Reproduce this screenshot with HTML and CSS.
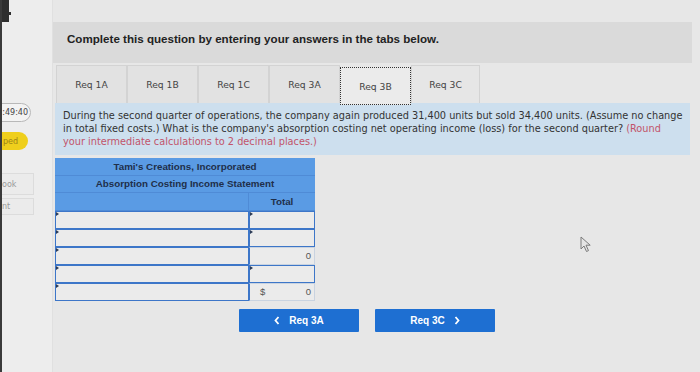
FILE: index.html
```html
<!DOCTYPE html>
<html lang="en">
<head>
    <meta charset="UTF-8">
    <meta name="viewport" content="width=device-width, initial-scale=1.0">
    <title>Req 3B</title>
    <link rel="stylesheet" href="styles.css">
</head>
<body>
    <div class="bezel-mark"></div>

    <div class="sidebar">
        <div class="timer">:49:40</div>
        <div class="skipped">ped</div>
        <div class="side-link ebook">ook</div>
        <div class="side-link print">nt</div>
    </div>

    <div class="main">
        <div class="instructions">Complete this question by entering your answers in the tabs below.</div>

        <div class="tabs">
            <div class="tab">Req 1A</div>
            <div class="tab">Req 1B</div>
            <div class="tab">Req 1C</div>
            <div class="tab">Req 3A</div>
            <div class="tab active">Req 3B</div>
            <div class="tab light">Req 3C</div>
        </div>

        <div class="question">
            During the second quarter of operations, the company again produced 31,400 units but sold 34,400 units. (Assume no change<br>
            in total fixed costs.) What is the company's absorption costing net operating income (loss) for the second quarter? <span class="hint">(Round<br>
            your intermediate calculations to 2 decimal places.)</span>
        </div>

        <div class="statement">
            <div class="st-head span">Tami's Creations, Incorporated</div>
            <div class="st-head span">Absorption Costing Income Statement</div>
            <div class="st-head blank"></div>
            <div class="st-head total">Total</div>

            <div class="cell input"></div>
            <div class="cell input"></div>

            <div class="cell input"></div>
            <div class="cell input"></div>

            <div class="cell input"></div>
            <div class="cell calc">0</div>

            <div class="cell input"></div>
            <div class="cell input"></div>

            <div class="cell input"></div>
            <div class="cell calc"><span class="dollar">$</span>0</div>
        </div>

        <div class="nav">
            <button class="nav-btn">
                <svg class="chev" width="6" height="9" viewBox="0 0 6 9"><polyline points="4.5,1 1.5,4.5 4.5,8" fill="none" stroke="#fff" stroke-width="1.8"/></svg>
                Req 3A
            </button>
            <button class="nav-btn">
                Req 3C
                <svg class="chev" width="6" height="9" viewBox="0 0 6 9"><polyline points="1.5,1 4.5,4.5 1.5,8" fill="none" stroke="#fff" stroke-width="1.8"/></svg>
            </button>
        </div>
    </div>

    <svg class="cursor" width="12" height="17" viewBox="0 0 12 17">
        <path d="M1 1 L1 13 L4 10 L6.5 15.5 L8.5 14.6 L6 9.2 L10.2 9.2 Z" fill="#e4e4e4" stroke="#7a7a7a" stroke-width="1" stroke-linejoin="round"/>
    </svg>
</body>
</html>
```

FILE: styles.css
```css
body {
    margin: 0;
    padding: 0;
    width: 700px;
    height: 372px;
    overflow: hidden;
    display: flex;
    background: #e7e7e7;
    font-family: 'DejaVu Sans', sans-serif;
    color: #333;
    border-left: 2px solid #3a3a3a;
    box-sizing: border-box;
    position: relative;
}
.bezel-mark {
    position: absolute;
    left: 0;
    top: 0;
    width: 7px;
    height: 22px;
    background: #2e2e2e;
}
.bezel-mark::after {
    content: '';
    position: absolute;
    left: 0;
    top: 12px;
    width: 9px;
    height: 3px;
    background: #2e2e2e;
}
.sidebar {
    width: 51px;
    flex-shrink: 0;
    background: #ededed;
    border-right: 1px solid #e0e0e0;
    padding-top: 103px;
    box-sizing: border-box;
    overflow: hidden;
    font-size: 8px;
}
.timer {
    margin-left: -10px;
    width: 39px;
    height: 19px;
    border: 1px solid #b8b8b8;
    border-radius: 10px;
    box-sizing: border-box;
    display: flex;
    align-items: center;
    justify-content: flex-end;
    padding-right: 2px;
    color: #444;
    background: #f3f3f3;
}
.skipped {
    margin-top: 10px;
    margin-left: -12px;
    width: 38px;
    height: 18px;
    border-radius: 9px;
    background: #efcf1c;
    color: #9c8418;
    display: flex;
    align-items: center;
    padding-left: 13px;
    box-sizing: border-box;
}
.side-link {
    margin-left: -4px;
    width: 36px;
    border: 1px solid #dcdcdc;
    background: #ebebeb;
    box-sizing: border-box;
    color: #9a9a9a;
    display: flex;
    align-items: center;
    padding-left: 3px;
}
.ebook {
    margin-top: 23px;
    height: 22px;
}
.print {
    margin-top: 3px;
    height: 17px;
}
.main {
    flex: 1;
    padding-top: 22px;
}
.instructions {
    width: 639px;
    height: 41px;
    background: #dadada;
    box-sizing: border-box;
    padding: 10px 0 0 14px;
    font-family: 'Liberation Sans', Arial, sans-serif;
    font-weight: bold;
    font-size: 11.6px;
    color: #222;
}
.tabs {
    display: flex;
    margin-top: 2px;
    margin-left: 3px;
    height: 38px;
}
.tab {
    width: 71px;
    height: 38px;
    box-sizing: border-box;
    background: #e2e2e2;
    border: 1px solid #d3d3d3;
    border-bottom: none;
    display: flex;
    align-items: center;
    justify-content: center;
    font-size: 9.2px;
    color: #444;
}
.tab.active {
    background: #ebebeb;
    border: 1px dotted #333;
    margin-top: 2px;
    position: relative;
    z-index: 1;
}
.tab.light {
    background: #e6e6e6;
    width: 69px;
}
.question {
    margin-left: 2px;
    width: 635px;
    height: 52px;
    background: #cddfee;
    box-sizing: border-box;
    padding: 6px 0 0 8px;
    font-size: 9.75px;
    line-height: 13.2px;
    color: #333;
    white-space: nowrap;
}
.hint {
    color: #c2546a;
}
.statement {
    margin-top: 3px;
    margin-left: 2px;
    width: 260px;
    display: grid;
    grid-template-columns: 194px 66px;
    font-family: 'Liberation Sans', Arial, sans-serif;
}
.st-head {
    background: #5a9be4;
    color: #1f2f4a;
    font-weight: bold;
    font-size: 9.8px;
    height: 17.5px;
    display: flex;
    align-items: center;
    justify-content: center;
    border-bottom: 1px solid #4f8bd6;
    box-sizing: border-box;
}
.st-head.span {
    grid-column: span 2;
}
.st-head.blank {
    border-right: 1px solid #4f8bd6;
}
.cell {
    height: 18px;
    box-sizing: border-box;
    background: #ebebeb;
    border: 1.5px solid #3d76c8;
    border-top-width: 1px;
    position: relative;
    font-size: 9.5px;
    color: #555;
}
.cell.input::before {
    content: '';
    position: absolute;
    left: 0;
    top: 0;
    border-left: 3px solid #2a3a55;
    border-top: 2px solid transparent;
    border-bottom: 2px solid transparent;
}
.cell.calc {
    display: flex;
    align-items: center;
    justify-content: flex-end;
    padding-right: 3px;
    border-color: #c9d3e0;
    border-left-color: #3d76c8;
}
.dollar {
    margin-right: auto;
    padding-left: 10px;
}
.nav {
    display: flex;
    gap: 16px;
    margin-top: 8px;
    margin-left: 186px;
}
.nav-btn {
    width: 120px;
    height: 23px;
    border: none;
    border-radius: 1px;
    background: #1e6fd2;
    color: #fff;
    font-family: 'Liberation Sans', Arial, sans-serif;
    font-weight: bold;
    font-size: 10px;
    padding: 0;
    display: flex;
    align-items: center;
    justify-content: center;
    gap: 9px;
}
.cursor {
    position: absolute;
    left: 578px;
    top: 236px;
}
```
